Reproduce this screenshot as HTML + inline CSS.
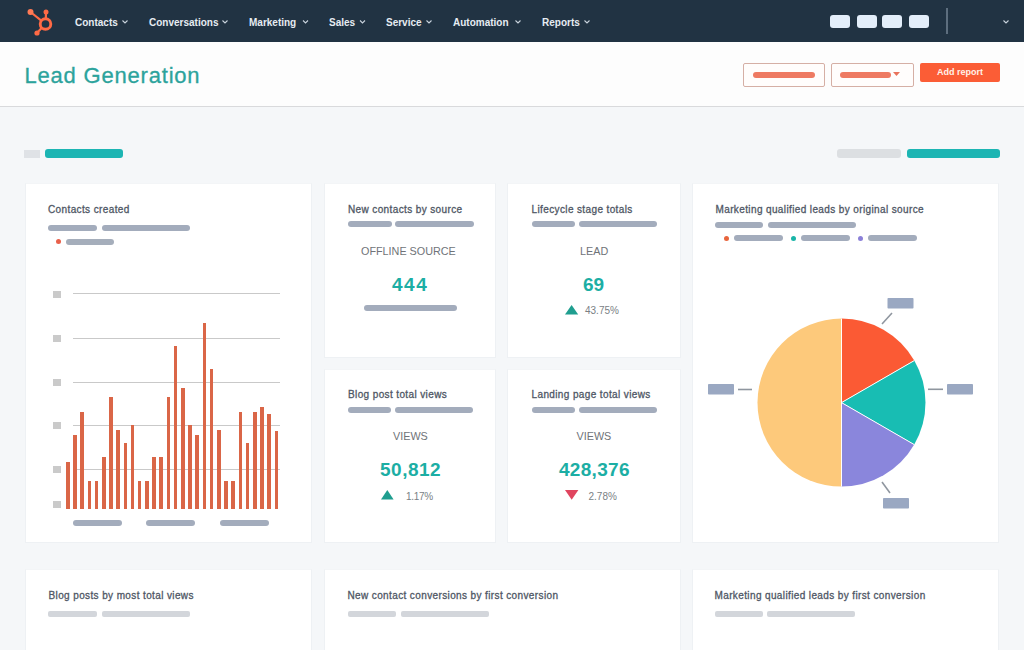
<!DOCTYPE html>
<html><head><meta charset="utf-8">
<style>
*{margin:0;padding:0;box-sizing:border-box}
html,body{width:1024px;height:650px;overflow:hidden;background:#f5f7f9;font-family:"Liberation Sans",sans-serif;position:relative}
.a{position:absolute}
.t{position:absolute;white-space:nowrap;line-height:1}
#nav{left:0;top:0;width:1024px;height:42px;background:#213343}
.nv{color:#e6ecf2;font-size:10px;font-weight:bold;top:17.5px}
.chev{position:absolute;top:19px;width:6px;height:4px}
#hdr{left:0;top:42px;width:1024px;height:65px;background:#fdfdfd;border-bottom:1px solid #d9dadc}
.card{position:absolute;background:#fff;border:1px solid #eef1f4;border-top-color:#f3f5f7}
.ttl{color:#4f5765;font-size:10px;letter-spacing:0.38px;-webkit-text-stroke:0.3px #4f5765}
.bar{position:absolute;height:6px;border-radius:3px;background:#a3acbc}
.lbar{position:absolute;height:6px;border-radius:2px;background:#d3d6db}
.kl{color:#6f7378;font-size:10.8px}
.num{color:#1caea4;font-size:19px;font-weight:bold}
.pct{color:#7a7f85;font-size:10px}
.sq{position:absolute;width:8px;height:7px;background:#cacaca}
.gl{position:absolute;left:73px;width:207px;height:1px;background:#c9c9c9}
.b{position:absolute;width:3.6px;background:#da6647}
</style></head><body>

<!-- NAV -->
<div id="nav" class="a">
  <svg class="a" style="left:24px;top:6px" width="32" height="32" viewBox="0 0 32 32">
    <g stroke="#ff6a45" fill="none">
      <circle cx="21.5" cy="18" r="5.3" stroke-width="2.9"/>
      <line x1="21.8" y1="12.5" x2="22" y2="6" stroke-width="2.2"/>
      <line x1="17.6" y1="14.8" x2="6.5" y2="6" stroke-width="2.2"/>
      <line x1="17.8" y1="21.8" x2="13" y2="27" stroke-width="2.2"/>
    </g>
    <circle cx="22" cy="6" r="2.5" fill="#ff6a45"/>
    <circle cx="6.5" cy="6" r="3" fill="#ff7a55"/>
    <circle cx="13" cy="27" r="2.6" fill="#ff6a45"/>
  </svg>
  <div class="t nv" style="left:75px">Contacts</div>
  <div class="t nv" style="left:149px">Conversations</div>
  <div class="t nv" style="left:249px">Marketing</div>
  <div class="t nv" style="left:329px">Sales</div>
  <div class="t nv" style="left:386px">Service</div>
  <div class="t nv" style="left:453px">Automation</div>
  <div class="t nv" style="left:542px">Reports</div>
  <svg class="a" style="left:0;top:0" width="1024" height="42">
    <g stroke="#c9d3dd" stroke-width="1.1" fill="none">
      <path d="M122.5 20.5 L125 23 L127.5 20.5"/>
      <path d="M222.5 20.5 L225 23 L227.5 20.5"/>
      <path d="M303 20.5 L305.5 23 L308 20.5"/>
      <path d="M360 20.5 L362.5 23 L365 20.5"/>
      <path d="M426.5 20.5 L429 23 L431.5 20.5"/>
      <path d="M515.5 20.5 L518 23 L520.5 20.5"/>
      <path d="M584.5 20.5 L587 23 L589.5 20.5"/>
      <path d="M1003.5 20.5 L1006 23 L1008.5 20.5"/>
    </g>
  </svg>
  <div class="a" style="left:830px;top:15px;width:20px;height:13px;border-radius:3px;background:#e3eefa"></div>
  <div class="a" style="left:857px;top:15px;width:20px;height:13px;border-radius:3px;background:#e3eefa"></div>
  <div class="a" style="left:882px;top:15px;width:20px;height:13px;border-radius:3px;background:#e3eefa"></div>
  <div class="a" style="left:909px;top:15px;width:20px;height:13px;border-radius:3px;background:#e3eefa"></div>
  <div class="a" style="left:946px;top:8px;width:1.5px;height:26px;background:#5d6e7e"></div>
</div>

<!-- HEADER -->
<div id="hdr" class="a">
  <div class="t" style="left:24.5px;top:23px;font-size:22px;color:#2ca39c;letter-spacing:0.8px;-webkit-text-stroke:0.3px #2ca39c">Lead Generation</div>
  <div class="a" style="left:743px;top:20.5px;width:82px;height:24px;border:1.6px solid #d5afa5;border-radius:2px;background:#fffdfc"></div>
  <div class="a" style="left:753px;top:29.5px;width:62px;height:6px;border-radius:3px;background:#ee7a62"></div>
  <div class="a" style="left:831px;top:20.5px;width:83px;height:24px;border:1.6px solid #d5afa5;border-radius:2px;background:#fffdfc"></div>
  <div class="a" style="left:840px;top:29.5px;width:51px;height:6px;border-radius:3px;background:#ee7a62"></div>
  <svg class="a" style="left:893px;top:30px" width="8" height="5"><path d="M0 0 L7 0 L3.5 4 Z" fill="#e9735c"/></svg>
  <div class="a" style="left:920px;top:20.5px;width:80px;height:19px;border-radius:2px;background:#fb5d36"></div>
  <div class="t" style="left:937px;top:26px;font-size:9px;font-weight:bold;color:#fff2ea">Add report</div>
</div>

<!-- tabs -->
<div class="a" style="left:24px;top:150px;width:16px;height:8px;background:#dfe2e6"></div>
<div class="a" style="left:45px;top:149px;width:78px;height:9px;border-radius:3px;background:#1cb5b3"></div>
<div class="a" style="left:837px;top:149px;width:64px;height:9px;border-radius:3px;background:#dcdfe2"></div>
<div class="a" style="left:907px;top:149px;width:93px;height:9px;border-radius:3px;background:#1cb5b3"></div>

<!-- CARD 1 -->
<div class="card" style="left:25px;top:183px;width:287px;height:360px">
</div>
<div class="t ttl" style="left:48px;top:205px">Contacts created</div>
<div class="bar" style="left:48px;top:224.5px;width:49px"></div>
<div class="bar" style="left:101.5px;top:224.5px;width:88px"></div>
<div class="a" style="left:56px;top:238.5px;width:5px;height:5px;border-radius:50%;background:#e9604a"></div>
<div class="bar" style="left:66px;top:238.5px;width:48px;background:#a5aebb"></div>

<div class="sq" style="left:53px;top:290.5px"></div>
<div class="sq" style="left:53px;top:334.5px"></div>
<div class="sq" style="left:53px;top:378.5px"></div>
<div class="sq" style="left:53px;top:422px"></div>
<div class="sq" style="left:53px;top:465.5px"></div>
<div class="sq" style="left:53px;top:500.5px"></div>
<div class="gl" style="top:293px"></div>
<div class="gl" style="top:337.5px"></div>
<div class="gl" style="top:381.5px"></div>
<div class="gl" style="top:425px"></div>
<div class="gl" style="top:468.5px"></div>
<div id="bars">
<div class="b" style="left:66.00px;top:462.2px;height:46.8px"></div>
<div class="b" style="left:73.19px;top:434.5px;height:74.5px"></div>
<div class="b" style="left:80.38px;top:411.9px;height:97.1px"></div>
<div class="b" style="left:87.57px;top:481.2px;height:27.8px"></div>
<div class="b" style="left:94.76px;top:481.2px;height:27.8px"></div>
<div class="b" style="left:101.95px;top:457px;height:52.0px"></div>
<div class="b" style="left:109.14px;top:397.2px;height:111.8px"></div>
<div class="b" style="left:116.33px;top:429.5px;height:79.5px"></div>
<div class="b" style="left:123.52px;top:442.9px;height:66.1px"></div>
<div class="b" style="left:130.71px;top:424.8px;height:84.2px"></div>
<div class="b" style="left:137.90px;top:481.2px;height:27.8px"></div>
<div class="b" style="left:145.09px;top:481.2px;height:27.8px"></div>
<div class="b" style="left:152.28px;top:457px;height:52.0px"></div>
<div class="b" style="left:159.47px;top:457px;height:52.0px"></div>
<div class="b" style="left:166.66px;top:397.3px;height:111.7px"></div>
<div class="b" style="left:173.85px;top:345.7px;height:163.3px"></div>
<div class="b" style="left:181.04px;top:388px;height:121.0px"></div>
<div class="b" style="left:188.23px;top:425.3px;height:83.7px"></div>
<div class="b" style="left:195.42px;top:434.7px;height:74.3px"></div>
<div class="b" style="left:202.61px;top:323px;height:186.0px"></div>
<div class="b" style="left:209.80px;top:369.4px;height:139.6px"></div>
<div class="b" style="left:216.99px;top:429.7px;height:79.3px"></div>
<div class="b" style="left:224.18px;top:481.1px;height:27.9px"></div>
<div class="b" style="left:231.37px;top:481px;height:28.0px"></div>
<div class="b" style="left:238.56px;top:411.7px;height:97.3px"></div>
<div class="b" style="left:245.75px;top:443.2px;height:65.8px"></div>
<div class="b" style="left:252.94px;top:411.7px;height:97.3px"></div>
<div class="b" style="left:260.13px;top:406.6px;height:102.4px"></div>
<div class="b" style="left:267.32px;top:414px;height:95.0px"></div>
<div class="b" style="left:274.51px;top:431.3px;height:77.7px"></div>
</div><!--ENDBARS-->
<div class="bar" style="left:72.5px;top:520px;width:49px"></div>
<div class="bar" style="left:146px;top:520px;width:49px"></div>
<div class="bar" style="left:220px;top:520px;width:49px"></div>

<!-- CARD 2 -->
<div class="card" style="left:324px;top:183px;width:172px;height:175px"></div>
<div class="t ttl" style="left:348px;top:205px">New contacts by source</div>
<div class="bar" style="left:348px;top:221px;width:43.5px"></div>
<div class="bar" style="left:395px;top:221px;width:79px"></div>
<div class="t kl" style="left:361px;top:246px">OFFLINE SOURCE</div>
<div class="t num" style="left:392px;top:275px;letter-spacing:1.5px">444</div>
<div class="bar" style="left:364px;top:305px;width:93px"></div>

<!-- CARD 3 -->
<div class="card" style="left:507px;top:183px;width:174px;height:175px"></div>
<div class="t ttl" style="left:531.5px;top:205px">Lifecycle stage totals</div>
<div class="bar" style="left:532px;top:221px;width:42.5px"></div>
<div class="bar" style="left:578.5px;top:221px;width:78.5px"></div>
<div class="t kl" style="left:580px;top:246px">LEAD</div>
<div class="t num" style="left:583px;top:275px">69</div>
<svg class="a" style="left:564.8px;top:305px" width="14" height="11"><path d="M6.6 0 L13.2 9.6 L0 9.6 Z" fill="#1f9e8f"/></svg>
<div class="t pct" style="left:585px;top:306px">43.75%</div>

<!-- CARD 4 -->
<div class="card" style="left:324px;top:369px;width:172px;height:174px"></div>
<div class="t ttl" style="left:348px;top:390px">Blog post total views</div>
<div class="bar" style="left:348px;top:406.5px;width:43px"></div>
<div class="bar" style="left:395px;top:406.5px;width:78px"></div>
<div class="t kl" style="left:393px;top:431px">VIEWS</div>
<div class="t num" style="left:380px;top:460px;letter-spacing:0.5px">50,812</div>
<svg class="a" style="left:381.2px;top:490.4px" width="14" height="11"><path d="M6.3 0 L12.6 9.5 L0 9.5 Z" fill="#1f9e8f"/></svg>
<div class="t pct" style="left:406px;top:491.7px;letter-spacing:-0.3px">1.17%</div>

<!-- CARD 5 -->
<div class="card" style="left:507px;top:369px;width:174px;height:174px"></div>
<div class="t ttl" style="left:531.5px;top:390px">Landing page total views</div>
<div class="bar" style="left:532px;top:406.5px;width:42.5px"></div>
<div class="bar" style="left:578.5px;top:406.5px;width:78.5px"></div>
<div class="t kl" style="left:576.5px;top:431px">VIEWS</div>
<div class="t num" style="left:559px;top:460px;letter-spacing:0.3px">428,376</div>
<svg class="a" style="left:564.6px;top:490px" width="14" height="11"><path d="M0 0 L13.4 0 L6.7 9.8 Z" fill="#e0455f"/></svg>
<div class="t pct" style="left:588.5px;top:491.7px">2.78%</div>

<!-- CARD 6 -->
<div class="card" style="left:692px;top:183px;width:307px;height:360px"></div>
<div class="t ttl" style="left:715.5px;top:205px">Marketing qualified leads by original source</div>
<div class="bar" style="left:715px;top:222px;width:48px"></div>
<div class="bar" style="left:768px;top:222px;width:88px"></div>
<div class="a" style="left:724px;top:235.5px;width:5px;height:5px;border-radius:50%;background:#e8653d"></div>
<div class="bar" style="left:733.5px;top:235px;width:49px"></div>
<div class="a" style="left:791px;top:235.5px;width:5px;height:5px;border-radius:50%;background:#1ab5a8"></div>
<div class="bar" style="left:800.5px;top:235px;width:49px"></div>
<div class="a" style="left:858px;top:235.5px;width:5px;height:5px;border-radius:50%;background:#8b80d8"></div>
<div class="bar" style="left:867.5px;top:235px;width:49px"></div>

<svg class="a" style="left:692px;top:184px" width="307" height="359" viewBox="692 184 307 359">
  <path d="M841.5 402.6 L841.5 318.6 A84 84 0 0 0 841.5 486.6 Z" fill="#fdc97b"/>
  <path d="M841.5 402.6 L841.5 318.6 A84 84 0 0 1 914.25 360.6 Z" fill="#fb5a34"/>
  <path d="M841.5 402.6 L914.25 360.6 A84 84 0 0 1 914.25 444.6 Z" fill="#18bdb3"/>
  <path d="M841.5 402.6 L914.25 444.6 A84 84 0 0 1 841.5 486.6 Z" fill="#8a86dc"/>
  <g stroke="#fff" stroke-width="1">
    <line x1="841.5" y1="402.6" x2="914.25" y2="360.6"/>
    <line x1="841.5" y1="402.6" x2="914.25" y2="444.6"/>
    <line x1="841.5" y1="318.6" x2="841.5" y2="486.6"/>
  </g>
  <g stroke="#8f969f" stroke-width="1.6">
    <line x1="882" y1="324" x2="892" y2="313"/>
    <line x1="928" y1="389.3" x2="943" y2="389.3"/>
    <line x1="738" y1="389.5" x2="752" y2="389.5"/>
    <line x1="882" y1="482" x2="890" y2="493"/>
  </g>
  <g fill="#9aa8c2">
    <rect x="887.5" y="298" width="26" height="10.5" rx="0.8"/>
    <rect x="947" y="384" width="26" height="10.5" rx="0.8"/>
    <rect x="708" y="384" width="26" height="10.5" rx="0.8"/>
    <rect x="883" y="498" width="26" height="10.5" rx="0.8"/>
  </g>
</svg>

<!-- BOTTOM CARDS -->
<div class="card" style="left:25px;top:569px;width:287px;height:90px"></div>
<div class="t ttl" style="left:48.5px;top:590.5px">Blog posts by most total views</div>
<div class="lbar" style="left:48px;top:610.5px;width:49px"></div>
<div class="lbar" style="left:101.5px;top:610.5px;width:88px"></div>

<div class="card" style="left:324px;top:569px;width:357px;height:90px"></div>
<div class="t ttl" style="left:347.5px;top:590.5px">New contact conversions by first conversion</div>
<div class="lbar" style="left:347.5px;top:610.5px;width:48px"></div>
<div class="lbar" style="left:400.5px;top:610.5px;width:88px"></div>

<div class="card" style="left:692px;top:569px;width:307px;height:90px"></div>
<div class="t ttl" style="left:714.5px;top:590.5px">Marketing qualified leads by first conversion</div>
<div class="lbar" style="left:714.5px;top:610.5px;width:48px"></div>
<div class="lbar" style="left:767px;top:610.5px;width:88px"></div>

</body></html>
